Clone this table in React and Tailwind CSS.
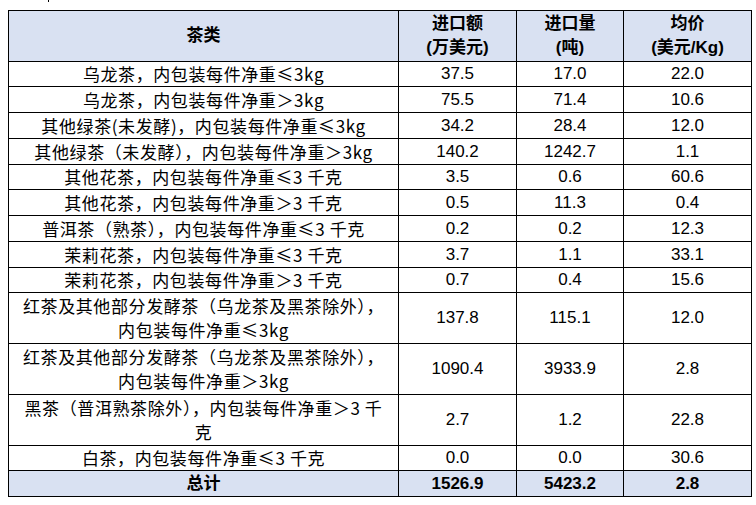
import React from 'react';

const rows = [
  { name: ['乌龙茶，内包装每件净重≤3kg'], amount: '37.5', volume: '17.0', price: '22.0', h: 'h-[25px]' },
  { name: ['乌龙茶，内包装每件净重＞3kg'], amount: '75.5', volume: '71.4', price: '10.6', h: 'h-[26px]' },
  { name: ['其他绿茶(未发酵)，内包装每件净重≤3kg'], amount: '34.2', volume: '28.4', price: '12.0', h: 'h-[26px]' },
  { name: ['其他绿茶（未发酵），内包装每件净重＞3kg'], amount: '140.2', volume: '1242.7', price: '1.1', h: 'h-[26px]' },
  { name: ['其他花茶，内包装每件净重≤3 千克'], amount: '3.5', volume: '0.6', price: '60.6', h: 'h-[25px]' },
  { name: ['其他花茶，内包装每件净重＞3 千克'], amount: '0.5', volume: '11.3', price: '0.4', h: 'h-[26px]' },
  { name: ['普洱茶（熟茶），内包装每件净重≤3 千克'], amount: '0.2', volume: '0.2', price: '12.3', h: 'h-[26px]' },
  { name: ['茉莉花茶，内包装每件净重≤3 千克'], amount: '3.7', volume: '1.1', price: '33.1', h: 'h-[26px]' },
  { name: ['茉莉花茶，内包装每件净重＞3 千克'], amount: '0.7', volume: '0.4', price: '15.6', h: 'h-[25px]' },
  { name: ['红茶及其他部分发酵茶（乌龙茶及黑茶除外），', '内包装每件净重≤3kg'], amount: '137.8', volume: '115.1', price: '12.0', h: 'h-[51px]' },
  { name: ['红茶及其他部分发酵茶（乌龙茶及黑茶除外），', '内包装每件净重＞3kg'], amount: '1090.4', volume: '3933.9', price: '2.8', h: 'h-[51px]' },
  { name: ['黑茶（普洱熟茶除外），内包装每件净重＞3 千', '克'], amount: '2.7', volume: '1.2', price: '22.8', h: 'h-[51px]' },
  { name: ['白茶，内包装每件净重≤3 千克'], amount: '0.0', volume: '0.0', price: '30.6', h: 'h-[25px]' },
];

const cell = 'border border-black p-0 text-center align-middle';

export default function App() {
  return (
    <div className="bg-white w-[756px] h-[505px] overflow-hidden text-black text-[17px] leading-[24px] font-['Liberation_Sans','Noto_Sans_CJK_SC',sans-serif]">
      {/* stray mark above the table */}
      <div className="h-[10px]">
        <div className="ml-[48px] w-px h-[2px] bg-black" />
      </div>

      <table className="ml-[8px] w-[744px] table-fixed border-collapse">
        <colgroup>
          <col className="w-[390px]" />
          <col className="w-[118px]" />
          <col className="w-[107px]" />
          <col className="w-[128px]" />
        </colgroup>
        <thead>
          <tr className="h-[51px] bg-[#d9e1f2] font-bold">
            <th className={cell}>茶类</th>
            <th className={cell}>
              <div>进口额</div>
              <div>(万美元)</div>
            </th>
            <th className={cell}>
              <div>进口量</div>
              <div>(吨)</div>
            </th>
            <th className={cell}>
              <div>均价</div>
              <div>(美元/Kg)</div>
            </th>
          </tr>
        </thead>
        <tbody>
          {rows.map((r, i) => (
            <tr key={i} className={r.h}>
              <td className={`${cell} overflow-hidden tracking-[0.6px] font-['Noto_Sans_CJK_SC',sans-serif]`}>
                {r.name.map((line, j) => (
                  <div key={j} className="whitespace-nowrap">{line}</div>
                ))}
              </td>
              <td className={cell}>{r.amount}</td>
              <td className={cell}>{r.volume}</td>
              <td className={cell}>{r.price}</td>
            </tr>
          ))}
          <tr className="h-[26px] bg-[#d9e1f2] font-bold">
            <td className={cell}>总计</td>
            <td className={cell}>1526.9</td>
            <td className={cell}>5423.2</td>
            <td className={cell}>2.8</td>
          </tr>
        </tbody>
      </table>
    </div>
  );
}
